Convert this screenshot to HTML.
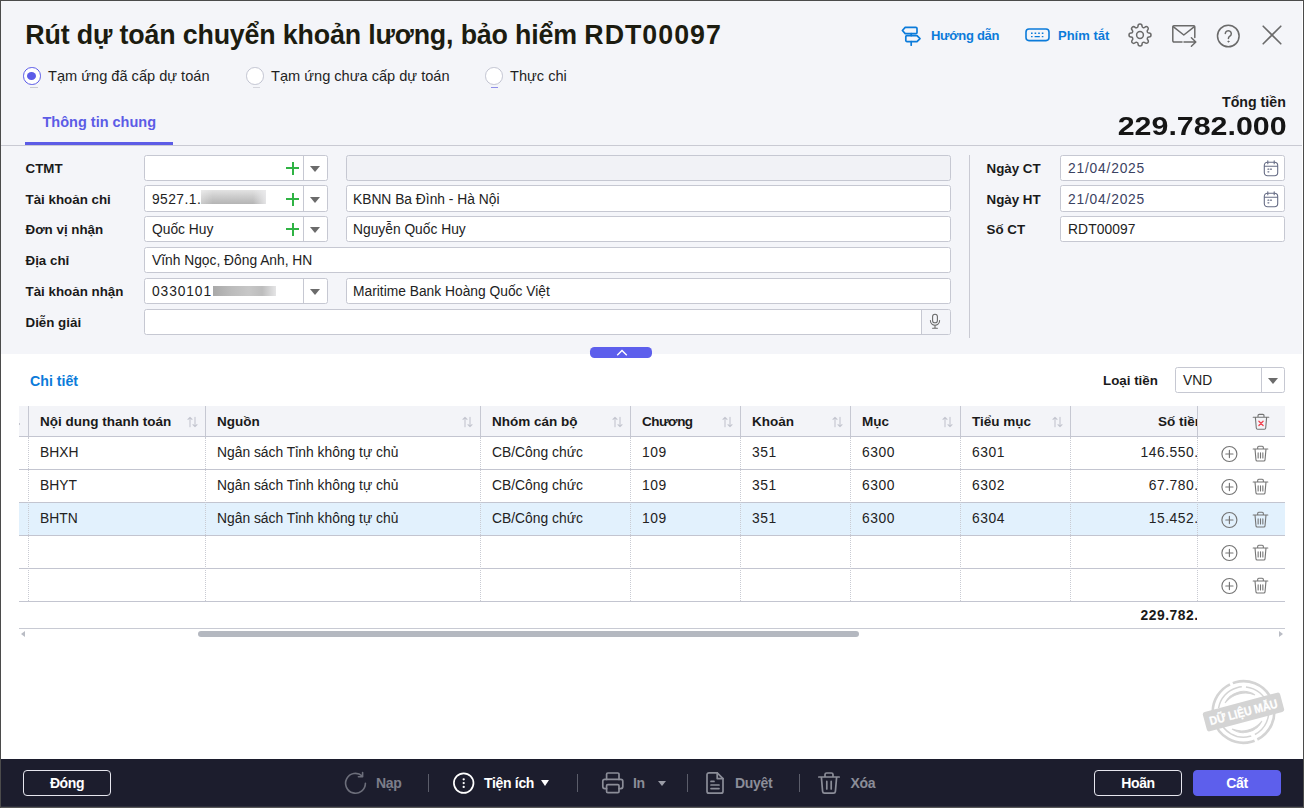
<!DOCTYPE html>
<html lang="vi"><head><meta charset="utf-8"><title>Rút dự toán chuyển khoản lương, bảo hiểm</title>
<style>
*{box-sizing:border-box;margin:0;padding:0}
html,body{width:1304px;height:808px;overflow:hidden;background:#fff}
body{font-family:"Liberation Sans",sans-serif;color:#1f1f1f;position:relative}
.a{position:absolute;white-space:nowrap}
#win{position:absolute;left:0;top:0;width:1304px;height:808px;background:#fff;overflow:hidden}
#hdr{position:absolute;left:0;top:0;width:1302px;height:354px;background:#f4f5f9}
.bl{position:absolute;left:0;top:0;width:1px;height:808px;background:#4b4b4b}
.bt{position:absolute;left:0;top:0;width:1304px;height:1px;background:#4b4b4b}
.br{position:absolute;left:1303px;top:0;width:1px;height:808px;background:#4b4b4b}
#title{left:25.300px;top:19px;font-size:26.8px;font-weight:700;color:#1c1c10;line-height:32px}
.lnk{color:#0b7bda;font-weight:700;font-size:13px;line-height:16px}
.rad{position:absolute;width:17.600px;height:17.600px;border-radius:50%;background:#fff;border:1.300px solid #c3c5d2}
.rad.on{border-color:#5c5ce8}
.rad.on:after{content:"";position:absolute;left:3.200px;top:3.500px;width:9px;height:8.200px;border-radius:50%;background:#5c5ce8}
.rl{font-size:14.6px;line-height:18px;color:#1f1f1f}
.lb{font-size:13.35px;font-weight:700;line-height:16px;color:#1a1a1a}
.fd{position:absolute;height:26px;background:#fff;border:1px solid #c6c8d2;border-radius:2.500px;font-size:13.8px;line-height:26px;padding-left:7px;white-space:nowrap;overflow:hidden;color:#222}
.fd.dis{background:#f1f2f6}
.sep{position:absolute;top:0;width:1px;height:24px;background:#c6c8d2}
.caret{position:absolute;width:0;height:0;border-left:5px solid transparent;border-right:5px solid transparent;border-top:6px solid #6b6b6b;margin-left:-.5px}
.plus{position:absolute;width:13px;height:13px}
.plus:before{content:"";position:absolute;left:0;top:5.5px;width:13px;height:2px;background:#2fb344}
.plus:after{content:"";position:absolute;left:5.5px;top:0;width:2px;height:13px;background:#2fb344}
.blur{position:absolute;height:14px;background:linear-gradient(90deg,rgba(255,255,255,.3) 0%,rgba(255,255,255,0) 18%,rgba(255,255,255,0) 80%,rgba(236,236,238,.85) 100%),linear-gradient(180deg,#e3e3e3,#cdcdcd 45%,#b4b4b4);filter:blur(.3px)}
.blur2{position:absolute;background:linear-gradient(90deg,#a9a9a9 0%,#bcbcbc 30%,#c7c7c7 57%,#bdbdbd 78%,#e5e5e6 100%);filter:blur(.3px)}
.num{letter-spacing:.45px}.num2{letter-spacing:.8px}.dt{color:#3b4262}
.hl{left:19px;width:1266px;height:1px;background:#c3c5d0}
.vd{top:437px;width:0;height:164px;border-left:1px dotted #c9cbd3}
.th{top:414px;font-size:13.5px;font-weight:700;line-height:16px;color:#1a1a1a}
.td{font-size:13.85px;line-height:18px;color:#222}
.td.n{letter-spacing:.55px}
.btn{width:88px;height:26px;border:1px solid #e6e6ee;border-radius:4px;color:#fff;font-weight:700;font-size:14px;letter-spacing:-.4px;line-height:24px;text-align:center}
.ft{font-size:14px;font-weight:700;line-height:18px;letter-spacing:-.32px}
.ft.dis{color:#7c7e8a}.ft.dis2{color:#8b8d98}
.fs{top:774px;width:1px;height:18px;background:#5b5d6a}
</style></head><body>
<div id="win">
<div id="hdr"></div>
<div class="a" id="title"><span style="letter-spacing:-.16px">Rút dự toán chuyển khoản lương, bảo hiểm</span></div><div class="a" id="title" style="left:584.300px;letter-spacing:1px">RDT00097</div>
<svg class="a" style="left:900px;top:24px" width="24" height="24" viewBox="0 0 24 24" fill="none" stroke="#0b7bda" stroke-width="1.7" stroke-linejoin="round" stroke-linecap="round"><path d="M5.2 3.4h10.6a1.2 1.2 0 0 1 1.2 1.2v3.8a1.2 1.2 0 0 1-1.2 1.2H5.2L2.4 6.5z"/><path d="M7 11.6h10l3 3-3 3H7a1.2 1.2 0 0 1-1.2-1.2v-3.6A1.2 1.2 0 0 1 7 11.6z"/><path d="M11.2 9.6v2M11.2 17.6v3.6"/></svg>
<div class="a lnk" style="left:931px;top:27.500px;font-size:13px;letter-spacing:-.27px">Hướng dẫn</div>
<svg class="a" style="left:1025px;top:28px" width="25" height="14" viewBox="0 0 25 14" fill="none" stroke="#0b7bda" stroke-width="1.6"><rect x="1" y="1" width="23" height="11.6" rx="3"/><path d="M6 5.2h1.6M9.6 5.2h1.6M13.2 5.2h1.6M16.8 5.2h1.6M6 8.6h1.6M9.6 8.6h5.2M16.8 8.6h1.6" stroke-width="1.4"/></svg>
<div class="a lnk" style="left:1058px;top:27.500px;font-size:13px;letter-spacing:0">Phím tắt</div>
<svg class="a" style="left:1128px;top:23px" width="24" height="24" viewBox="0 0 24 24" fill="none" stroke="#6a6a6a" stroke-width="1.5" stroke-linejoin="round" stroke-linecap="round"><circle cx="12" cy="12" r="3.400"/><path d="M19.4 15a1.65 1.65 0 0 0 .33 1.82l.06.06a2 2 0 1 1-2.83 2.83l-.06-.06a1.65 1.65 0 0 0-1.82-.33 1.65 1.65 0 0 0-1 1.51V21a2 2 0 0 1-4 0v-.09A1.65 1.65 0 0 0 9 19.4a1.65 1.65 0 0 0-1.82.33l-.06.06a2 2 0 1 1-2.83-2.83l.06-.06a1.65 1.65 0 0 0 .33-1.82 1.65 1.65 0 0 0-1.51-1H3a2 2 0 0 1 0-4h.09A1.65 1.65 0 0 0 4.600 9a1.65 1.65 0 0 0-.33-1.820l-.06-.06a2 2 0 1 1 2.83-2.83l.06.06a1.65 1.650 0 0 0 1.82.33H9a1.65 1.65 0 0 0 1-1.51V3a2 2 0 0 1 4 0v.09a1.65 1.65 0 0 0 1 1.51 1.65 1.65 0 0 0 1.82-.33l.06-.06a2 2 0 1 1 2.83 2.83l-.06.06a1.65 1.65 0 0 0-.33 1.82V9a1.65 1.65 0 0 0 1.51 1H21a2 2 0 0 1 0 4h-.09a1.65 1.65 0 0 0-1.51 1z"/></svg>
<svg class="a" style="left:1171px;top:24px" width="27" height="24" viewBox="0 0 27 24" fill="none" stroke="#6a6a6a" stroke-width="1.5" stroke-linejoin="round" stroke-linecap="round"><path d="M11 18H3a1.2 1.2 0 0 1-1.200-1.200V3a1.200 1.200 0 0 1 1.200-1.200h19.600A1.200 1.200 0 0 1 23.800 3v10.500"/><path d="M2.200 2.600l10.600 8.400 10.600-8.400"/><path d="M13 18h11.600M20.400 13.800l4.400 4.200-4.400 4.200"/></svg>
<svg class="a" style="left:1216px;top:24px" width="25" height="25" viewBox="0 0 25 25" fill="none" stroke="#6a6a6a" stroke-width="1.5" stroke-linecap="round"><circle cx="12.300" cy="12" r="10.800"/><path d="M9.300 9.600a3 3 0 1 1 4.600 2.600c-.9.600-1.500 1.100-1.500 2.300"/><circle cx="12.400" cy="17.600" r=".6" fill="#6a6a6a" stroke-width=".8"/></svg>
<svg class="a" style="left:1262px;top:25px" width="20" height="20" viewBox="0 0 20 20" fill="none" stroke="#6a6a6a" stroke-width="1.600" stroke-linecap="round"><path d="M1.200 1.200l17.600 17.600M18.800 1.200L1.200 18.800"/></svg>

<div class="rad on" style="left:23.200px;top:67px"></div><div class="a rl" style="left:48px;top:67px">Tạm ứng đã cấp dự toán</div>
<div class="rad" style="left:246px;top:67px"></div><div class="a rl" style="left:271px;top:67px">Tạm ứng chưa cấp dự toán</div>
<div class="rad" style="left:485px;top:67px"></div><div class="a rl" style="left:510px;top:67px">Thực chi</div>
<div class="a" style="left:30px;top:87px;width:8px;height:1px;background:#c9cad2"></div>
<div class="a" style="left:253px;top:87px;width:7px;height:1px;background:#d4d5dc"></div>
<div class="a" style="left:491px;top:87px;width:7px;height:1px;background:#8f8fe8"></div>
<div class="a" style="right:18.200px;top:94px;font-size:14.2px;font-weight:700;line-height:16px;color:#1a1a1a">Tổng tiền</div>
<div class="a" style="right:17.500px;top:111px;font-size:26px;font-weight:700;line-height:30px;color:#151515;transform:scaleX(1.168);transform-origin:100% 50%">229.782.000</div>
<div class="a" style="left:42.500px;top:113px;font-size:14.5px;font-weight:700;line-height:18px;color:#5c5ce6">Thông tin chung</div>
<div class="a" style="left:25px;top:142px;width:148px;height:3px;background:#5c5ce6"></div>
<div class="a" style="left:1px;top:145px;width:1301px;height:1px;background:#c9cad3"></div>

<!--TOTAL-->
<!--TAB-->
<div class="a lb" style="left:25.500px;top:161px">CTMT</div>
<div class="a lb" style="left:25.500px;top:192px">Tài khoản chi</div>
<div class="a lb" style="left:25.500px;top:222px">Đơn vị nhận</div>
<div class="a lb" style="left:25.500px;top:253px">Địa chỉ</div>
<div class="a lb" style="left:25.500px;top:284px">Tài khoản nhận</div>
<div class="a lb" style="left:25.500px;top:315px">Diễn giải</div>

<div class="fd" style="left:144px;top:155px;width:184px"><i class="plus" style="left:141px;top:5.500px"></i><i class="sep" style="left:158px"></i><i class="caret" style="left:165px;top:10px"></i></div>
<div class="fd dis" style="left:346px;top:155px;width:605px;padding-left:6px"></div>

<div class="fd" style="left:144px;top:185px;height:27px;padding-top:1px;width:184px"><span class="num">9527.1.</span><i class="blur" style="left:56px;top:4px;width:65px;height:14px"></i><i class="plus" style="left:141px;top:6.500px"></i><i class="sep" style="left:158px;height:25px"></i><i class="caret" style="left:165px;top:11px"></i></div>
<div class="fd" style="left:346px;top:185px;height:27px;padding-top:1px;width:605px;padding-left:6px">KBNN Ba Đình - Hà Nội</div>

<div class="fd" style="left:144px;top:216px;width:184px">Quốc Huy<i class="plus" style="left:141px;top:5.500px"></i><i class="sep" style="left:158px"></i><i class="caret" style="left:165px;top:10px"></i></div>
<div class="fd" style="left:346px;top:216px;width:605px;padding-left:6px">Nguyễn Quốc Huy</div>

<div class="fd" style="left:144px;top:247px;width:807px">Vĩnh Ngọc, Đông Anh, HN</div>

<div class="fd" style="left:144px;top:278px;width:184px"><span class="num" style="letter-spacing:.9px">0330101</span><i class="blur2" style="left:68px;top:7px;width:63px;height:10px"></i><i class="sep" style="left:158px"></i><i class="caret" style="left:165px;top:10px"></i></div>
<div class="fd" style="left:346px;top:278px;width:605px;padding-left:6px">Maritime Bank Hoàng Quốc Việt</div>

<div class="fd" style="left:144px;top:309px;width:807px"><i class="a" style="left:777px;top:0;width:29px;height:24px;background:#f4f5f9"></i><i class="sep" style="left:776px"></i>
<svg class="a" style="left:782px;top:3.300px" width="16" height="17" viewBox="0 0 16 17" fill="none" stroke="#6a6a6a" stroke-width="1.100" stroke-linecap="round"><rect x="5.600" y="1.200" width="4.800" height="8.600" rx="2.400"/><path d="M3.400 7.600a4.600 4.600 0 0 0 9.200 0M8 12.400v2.600M5.600 15.200h4.800"/></svg></div>

<div class="a" style="left:969px;top:155px;width:1px;height:183px;background:#c9cad3"></div>

<div class="a lb" style="left:986.500px;top:161px">Ngày CT</div>
<div class="a lb" style="left:986.500px;top:192px">Ngày HT</div>
<div class="a lb" style="left:986.500px;top:222px">Số CT</div>
<div class="fd dt" style="left:1060px;top:155px;width:225px"><span class="num2">21/04/2025</span><svg class="a cal" style="left:201px;top:3px" width="18" height="19" viewBox="0 0 18 19" fill="none" stroke="#666c85" stroke-width="1.100" stroke-linecap="round"><rect x="2.300" y="3.300" width="13.400" height="13.400" rx="3.200"/><path d="M2.500 7.300h13M5.800 1.700v3M12.200 1.700v3"/><path d="M6 10.200h.8M8.600 10.200h.8M6 12.800h.8" stroke-width="1.300"/></svg></div>
<div class="fd dt" style="left:1060px;top:185px;height:27px;padding-top:1px;width:225px"><span class="num2">21/04/2025</span><svg class="a cal" style="left:201px;top:4px" width="18" height="19" viewBox="0 0 18 19" fill="none" stroke="#666c85" stroke-width="1.100" stroke-linecap="round"><rect x="2.300" y="3.300" width="13.400" height="13.400" rx="3.200"/><path d="M2.500 7.300h13M5.800 1.700v3M12.200 1.700v3"/><path d="M6 10.200h.8M8.600 10.200h.8M6 12.800h.8" stroke-width="1.300"/></svg></div>
<div class="fd" style="left:1060px;top:216px;width:225px"><span style="letter-spacing:.1px">RDT00097</span></div>

<div class="a" style="left:590px;top:347px;width:62px;height:11px;border-radius:4.500px;background:#5d5fec"></div>
<svg class="a" style="left:615px;top:348px" width="14" height="9" viewBox="0 0 14 9" fill="none" stroke="#fff" stroke-width="1.400"><path d="M2.200 7.300L7 2.600l4.800 4.700"/></svg>

<!--TABLE_START-->
<div class="a" style="left:30px;top:372px;font-size:14.2px;font-weight:700;line-height:18px;color:#0b7bda">Chi tiết</div>
<div class="a lb" style="left:1103px;top:373px">Loại tiền</div>
<div class="fd" style="left:1175px;top:367px;width:110px">VND<i class="sep" style="left:85px"></i><i class="caret" style="left:92px;top:10px"></i></div>
<div class="a" style="left:19px;top:406px;width:1266px;height:30px;background:#f3f4f8"></div>
<div class="a" style="left:19px;top:503px;width:1266px;height:32px;background:#e2f1fd"></div>
<div class="a hl" style="top:436px"></div>
<div class="a hl" style="top:469px"></div>
<div class="a hl" style="top:502px"></div>
<div class="a hl" style="top:535px"></div>
<div class="a hl" style="top:568px"></div>
<div class="a hl" style="top:601px"></div>
<div class="a hl" style="top:628px;background:#c8cad3"></div>
<div class="a" style="left:28px;top:406px;width:1px;height:30px;background:#c6c8d2"></div>
<div class="a" style="left:205px;top:406px;width:1px;height:30px;background:#c6c8d2"></div>
<div class="a" style="left:480px;top:406px;width:1px;height:30px;background:#c6c8d2"></div>
<div class="a" style="left:630px;top:406px;width:1px;height:30px;background:#c6c8d2"></div>
<div class="a" style="left:740px;top:406px;width:1px;height:30px;background:#c6c8d2"></div>
<div class="a" style="left:850px;top:406px;width:1px;height:30px;background:#c6c8d2"></div>
<div class="a" style="left:960px;top:406px;width:1px;height:30px;background:#c6c8d2"></div>
<div class="a" style="left:1070px;top:406px;width:1px;height:30px;background:#c6c8d2"></div>
<div class="a" style="left:1197px;top:406px;width:1px;height:30px;background:#c6c8d2"></div>
<div class="a vd" style="left:28px"></div>
<div class="a vd" style="left:205px"></div>
<div class="a vd" style="left:480px"></div>
<div class="a vd" style="left:630px"></div>
<div class="a vd" style="left:740px"></div>
<div class="a vd" style="left:850px"></div>
<div class="a vd" style="left:960px"></div>
<div class="a vd" style="left:1070px"></div>
<div class="a vd" style="left:1197px"></div>
<div class="a" style="left:19px;top:423px;width:1px;height:2px;background:#c4c6cf"></div>
<div class="a th" style="left:40px">Nội dung thanh toán</div>
<svg class="a" style="left:187px;top:416px" width="11" height="12" viewBox="0 0 11 12" fill="none" stroke="#c3c5cf" stroke-width="1.100" stroke-linecap="round" stroke-linejoin="round"><path d="M3 10.800V1.400M1 3.400l2-2 2 2M8 1.200v9.400M6 8.600l2 2 2-2"/></svg>
<div class="a th" style="left:217px">Nguồn</div>
<svg class="a" style="left:462px;top:416px" width="11" height="12" viewBox="0 0 11 12" fill="none" stroke="#c3c5cf" stroke-width="1.100" stroke-linecap="round" stroke-linejoin="round"><path d="M3 10.800V1.400M1 3.400l2-2 2 2M8 1.200v9.400M6 8.600l2 2 2-2"/></svg>
<div class="a th" style="left:492px">Nhóm cán bộ</div>
<svg class="a" style="left:612px;top:416px" width="11" height="12" viewBox="0 0 11 12" fill="none" stroke="#c3c5cf" stroke-width="1.100" stroke-linecap="round" stroke-linejoin="round"><path d="M3 10.800V1.400M1 3.400l2-2 2 2M8 1.200v9.400M6 8.600l2 2 2-2"/></svg>
<div class="a th" style="left:642px;letter-spacing:-.55px">Chương</div>
<svg class="a" style="left:722px;top:416px" width="11" height="12" viewBox="0 0 11 12" fill="none" stroke="#c3c5cf" stroke-width="1.100" stroke-linecap="round" stroke-linejoin="round"><path d="M3 10.800V1.400M1 3.400l2-2 2 2M8 1.200v9.400M6 8.600l2 2 2-2"/></svg>
<div class="a th" style="left:752px">Khoản</div>
<svg class="a" style="left:832px;top:416px" width="11" height="12" viewBox="0 0 11 12" fill="none" stroke="#c3c5cf" stroke-width="1.100" stroke-linecap="round" stroke-linejoin="round"><path d="M3 10.800V1.400M1 3.400l2-2 2 2M8 1.200v9.400M6 8.600l2 2 2-2"/></svg>
<div class="a th" style="left:862px">Mục</div>
<svg class="a" style="left:942px;top:416px" width="11" height="12" viewBox="0 0 11 12" fill="none" stroke="#c3c5cf" stroke-width="1.100" stroke-linecap="round" stroke-linejoin="round"><path d="M3 10.800V1.400M1 3.400l2-2 2 2M8 1.200v9.400M6 8.600l2 2 2-2"/></svg>
<div class="a th" style="left:972px">Tiểu mục</div>
<svg class="a" style="left:1052px;top:416px" width="11" height="12" viewBox="0 0 11 12" fill="none" stroke="#c3c5cf" stroke-width="1.100" stroke-linecap="round" stroke-linejoin="round"><path d="M3 10.800V1.400M1 3.400l2-2 2 2M8 1.200v9.400M6 8.600l2 2 2-2"/></svg>
<div class="a" style="left:1071px;top:406px;width:126px;height:30px;overflow:hidden"><div class="a th" style="right:-6px;top:8px">Số tiền</div></div>
<div class="a td" style="left:40px;top:443px">BHXH</div>
<div class="a td" style="left:217px;top:443px">Ngân sách Tỉnh không tự chủ</div>
<div class="a td" style="left:492px;top:443px">CB/Công chức</div>
<div class="a td n" style="left:642px;top:443px">109</div>
<div class="a td n" style="left:752px;top:443px">351</div>
<div class="a td n" style="left:862px;top:443px">6300</div>
<div class="a td n" style="left:972px;top:443px">6301</div>
<div class="a" style="left:1071px;top:437px;width:126px;height:32px;overflow:hidden"><div class="a td n" style="right:-26.500px;top:6px">146.550.000</div></div>
<svg class="a" style="left:1220px;top:445px" width="19" height="19" viewBox="0 0 19 19" fill="none" stroke="#747474" stroke-width="1.150" stroke-linecap="round"><circle cx="9.400" cy="9" r="7.500"/><path d="M5.800 9h7.200M9.400 5.400v7.200"/></svg>
<svg class="a" style="left:1251.500px;top:445.3px" width="17" height="17.900" viewBox="0 0 18 19" fill="none" stroke="#747474" stroke-width="1.150" stroke-linecap="round" stroke-linejoin="round"><path d="M1.200 4.300h15.600M6 4.100V2.600a1.200 1.200 0 0 1 1.200-1.200h3.600A1.200 1.200 0 0 1 12 2.600v1.500M3.200 4.600l1 11.200a1.300 1.300 0 0 0 1.300 1.200h7a1.300 1.300 0 0 0 1.300-1.200l1-11.200M6.500 8.400v5.400M9 8.400v5.400M11.500 8.400v5.400"/></svg>
<div class="a td" style="left:40px;top:476px">BHYT</div>
<div class="a td" style="left:217px;top:476px">Ngân sách Tỉnh không tự chủ</div>
<div class="a td" style="left:492px;top:476px">CB/Công chức</div>
<div class="a td n" style="left:642px;top:476px">109</div>
<div class="a td n" style="left:752px;top:476px">351</div>
<div class="a td n" style="left:862px;top:476px">6300</div>
<div class="a td n" style="left:972px;top:476px">6302</div>
<div class="a" style="left:1071px;top:470px;width:126px;height:32px;overflow:hidden"><div class="a td n" style="right:-26.500px;top:6px">67.780.000</div></div>
<svg class="a" style="left:1220px;top:478px" width="19" height="19" viewBox="0 0 19 19" fill="none" stroke="#747474" stroke-width="1.150" stroke-linecap="round"><circle cx="9.400" cy="9" r="7.500"/><path d="M5.800 9h7.200M9.400 5.400v7.200"/></svg>
<svg class="a" style="left:1251.500px;top:478.3px" width="17" height="17.900" viewBox="0 0 18 19" fill="none" stroke="#747474" stroke-width="1.150" stroke-linecap="round" stroke-linejoin="round"><path d="M1.200 4.300h15.600M6 4.100V2.600a1.200 1.200 0 0 1 1.200-1.200h3.600A1.200 1.200 0 0 1 12 2.600v1.500M3.200 4.600l1 11.200a1.300 1.300 0 0 0 1.300 1.200h7a1.300 1.300 0 0 0 1.300-1.200l1-11.200M6.500 8.400v5.400M9 8.400v5.400M11.500 8.400v5.400"/></svg>
<div class="a td" style="left:40px;top:509px">BHTN</div>
<div class="a td" style="left:217px;top:509px">Ngân sách Tỉnh không tự chủ</div>
<div class="a td" style="left:492px;top:509px">CB/Công chức</div>
<div class="a td n" style="left:642px;top:509px">109</div>
<div class="a td n" style="left:752px;top:509px">351</div>
<div class="a td n" style="left:862px;top:509px">6300</div>
<div class="a td n" style="left:972px;top:509px">6304</div>
<div class="a" style="left:1071px;top:503px;width:126px;height:32px;overflow:hidden"><div class="a td n" style="right:-26.500px;top:6px">15.452.000</div></div>
<svg class="a" style="left:1220px;top:511px" width="19" height="19" viewBox="0 0 19 19" fill="none" stroke="#747474" stroke-width="1.150" stroke-linecap="round"><circle cx="9.400" cy="9" r="7.500"/><path d="M5.800 9h7.200M9.400 5.400v7.200"/></svg>
<svg class="a" style="left:1251.500px;top:511.3px" width="17" height="17.900" viewBox="0 0 18 19" fill="none" stroke="#747474" stroke-width="1.150" stroke-linecap="round" stroke-linejoin="round"><path d="M1.200 4.300h15.600M6 4.100V2.600a1.200 1.200 0 0 1 1.200-1.200h3.600A1.200 1.200 0 0 1 12 2.600v1.500M3.200 4.600l1 11.200a1.300 1.300 0 0 0 1.300 1.200h7a1.300 1.300 0 0 0 1.300-1.200l1-11.200M6.500 8.400v5.400M9 8.400v5.400M11.500 8.400v5.400"/></svg>
<svg class="a" style="left:1220px;top:544px" width="19" height="19" viewBox="0 0 19 19" fill="none" stroke="#747474" stroke-width="1.150" stroke-linecap="round"><circle cx="9.400" cy="9" r="7.500"/><path d="M5.800 9h7.200M9.400 5.400v7.200"/></svg>
<svg class="a" style="left:1251.500px;top:544.3px" width="17" height="17.900" viewBox="0 0 18 19" fill="none" stroke="#747474" stroke-width="1.150" stroke-linecap="round" stroke-linejoin="round"><path d="M1.200 4.300h15.600M6 4.100V2.600a1.200 1.200 0 0 1 1.200-1.200h3.600A1.200 1.200 0 0 1 12 2.600v1.500M3.200 4.600l1 11.200a1.300 1.300 0 0 0 1.300 1.200h7a1.300 1.300 0 0 0 1.300-1.200l1-11.200M6.500 8.400v5.400M9 8.400v5.400M11.500 8.400v5.400"/></svg>
<svg class="a" style="left:1220px;top:577px" width="19" height="19" viewBox="0 0 19 19" fill="none" stroke="#747474" stroke-width="1.150" stroke-linecap="round"><circle cx="9.400" cy="9" r="7.500"/><path d="M5.800 9h7.200M9.400 5.400v7.200"/></svg>
<svg class="a" style="left:1251.500px;top:577.3px" width="17" height="17.900" viewBox="0 0 18 19" fill="none" stroke="#747474" stroke-width="1.150" stroke-linecap="round" stroke-linejoin="round"><path d="M1.200 4.300h15.600M6 4.100V2.600a1.200 1.200 0 0 1 1.200-1.200h3.600A1.200 1.200 0 0 1 12 2.600v1.500M3.200 4.600l1 11.200a1.300 1.300 0 0 0 1.300 1.200h7a1.300 1.300 0 0 0 1.300-1.200l1-11.200M6.500 8.400v5.400M9 8.400v5.400M11.500 8.400v5.400"/></svg>
<svg class="a" style="left:1252px;top:413px" width="18" height="18" viewBox="0 0 18 18" fill="none" stroke="#747474" stroke-width="1.100" stroke-linecap="round" stroke-linejoin="round"><path d="M1.200 4.300h15.600M6 4.100V2.600a1.200 1.200 0 0 1 1.200-1.200h3.600A1.200 1.200 0 0 1 12 2.600v1.500M3.400 4.600l.9 10.400a1.300 1.300 0 0 0 1.300 1.200h6.800a1.300 1.300 0 0 0 1.300-1.200l.9-10.400"/><path d="M6.900 8.300l4.200 4.200M11.100 8.300l-4.200 4.200" stroke="#f0424f" stroke-width="1.300"/></svg>
<div class="a" style="left:1071px;top:602px;width:126px;height:26px;overflow:hidden"><div class="a td n" style="right:-26.500px;top:4px;font-weight:700;color:#1a1a1a">229.782.000</div></div>
<div class="a" style="left:198px;top:631px;width:661px;height:6px;border-radius:3px;background:#b4b8c0"></div>
<div class="a" style="left:21px;top:631px;width:0;height:0;border-top:3px solid transparent;border-bottom:3px solid transparent;border-right:4px solid #b9bcc4"></div>
<div class="a" style="left:1279px;top:631px;width:0;height:0;border-top:3px solid transparent;border-bottom:3px solid transparent;border-left:4px solid #b9bcc4"></div>
<!--TABLE_END-->
<svg class="a" style="left:1195.800px;top:672.300px" width="96" height="80" viewBox="0 0 96 80"><g transform="translate(47.500 40)" fill="none" stroke="#d4d4d4"><g transform="rotate(-15)"><circle r="30.800" stroke-width="2.600" stroke-dasharray="42 3 56 4 34 3"/><circle r="25.200" stroke-width="1.500" stroke-dasharray="34 4 48 3"/><path d="M-15.500 -13.500a20.500 20.500 0 0 1 31 0a26 26 0 0 0 -31 0zM-15.500 13.500a20.500 20.500 0 0 0 31 0a26 26 0 0 1 -31 0z" fill="#d4d4d4" stroke-width="1"/><rect x="-40" y="-10" width="80" height="20" rx="2.500" fill="#d4d4d4" stroke="none"/><text x="0" y="4.400" text-anchor="middle" font-family="Liberation Sans, sans-serif" font-weight="700" font-size="12" fill="#fff" stroke="#fff" stroke-width=".3" textLength="70" lengthAdjust="spacingAndGlyphs">DỮ LIỆU MẪU</text></g></g></svg>

<div class="a" style="left:1px;top:759px;width:1302px;height:49px;background:#1c1d2d"></div>
<div class="a btn" style="left:23px;top:770px">Đóng</div>
<div class="a btn" style="left:1094px;top:770px">Hoãn</div>
<div class="a btn" style="left:1193px;top:770px;background:#5d5fec;border-color:#5d5fec">Cất</div>
<svg class="a" style="left:343px;top:771px" width="25" height="25" viewBox="0 0 25 25" fill="none" stroke="#6c6e7a" stroke-width="1.600" stroke-linecap="round" stroke-linejoin="round"><path d="M22.400 12.300a9.900 9.900 0 1 1-3.300-7.400"/><path d="M19.600 1.600v4.200h-4.200" /></svg>
<div class="a ft dis" style="left:376px;top:774px">Nạp</div>
<div class="a fs" style="left:428px"></div>
<svg class="a" style="left:452px;top:771px" width="24" height="24" viewBox="0 0 24 24" fill="none" stroke="#fff" stroke-width="1.700"><circle cx="11.700" cy="12.100" r="9.800"/><g fill="#fff" stroke="none"><circle cx="11.700" cy="8.300" r="1.150"/><circle cx="11.700" cy="12.100" r="1.150"/><circle cx="11.700" cy="15.900" r="1.150"/></g></svg>
<div class="a ft" style="left:484px;top:774px;color:#fff">Tiện ích</div>
<div class="a" style="left:541px;top:780px;width:0;height:0;border-left:4.500px solid transparent;border-right:4.500px solid transparent;border-top:6px solid #fff"></div>
<div class="a fs" style="left:577px"></div>
<svg class="a" style="left:601px;top:771px" width="24" height="24" viewBox="0 0 24 24" fill="none" stroke="#8b8d98" stroke-width="1.700" stroke-linejoin="round" stroke-linecap="round"><path d="M5.600 8.400V3.200a1.200 1.200 0 0 1 1.200-1.200h10a1.200 1.200 0 0 1 1.200 1.200v5.200"/><path d="M5.600 17.600H3.800a2 2 0 0 1-2-2v-5.200a2 2 0 0 1 2-2h16a2 2 0 0 1 2 2v5.200a2 2 0 0 1-2 2H18"/><rect x="5.600" y="13.600" width="12.400" height="8" rx="1.200"/></svg>
<div class="a ft dis2" style="left:633px;top:774px">In</div>
<div class="a" style="left:658px;top:780.500px;width:0;height:0;border-left:4.500px solid transparent;border-right:4.500px solid transparent;border-top:5.500px solid #9b9da7"></div>
<div class="a fs" style="left:687px"></div>
<svg class="a" style="left:704px;top:771px" width="22" height="24" viewBox="0 0 22 24" fill="none" stroke="#8b8d98" stroke-width="1.700" stroke-linejoin="round" stroke-linecap="round"><path d="M13.200 1.800H5a2 2 0 0 0-2 2v16.400a2 2 0 0 0 2 2h12a2 2 0 0 0 2-2V7.600z"/><path d="M13.200 1.800v5.800H19M7 10.400h3M7 14h8M7 17.600h8"/></svg>
<div class="a ft dis2" style="left:735px;top:774px">Duyệt</div>
<div class="a fs" style="left:798.500px"></div>
<svg class="a" style="left:817px;top:771px" width="24" height="24" viewBox="0 0 24 24" fill="none" stroke="#8b8d98" stroke-width="1.700" stroke-linejoin="round" stroke-linecap="round"><path d="M1.800 6h20.400M8 5.800V3.600a1.600 1.600 0 0 1 1.600-1.600h4.800A1.600 1.600 0 0 1 16 3.600v2.200M4.400 6.400l1.200 14a2 2 0 0 0 2 1.800h8.800a2 2 0 0 0 2-1.800l1.200-14M9.800 10.400v7.600M14.200 10.400v7.600"/></svg>
<div class="a ft dis2" style="left:850.500px;top:774px">Xóa</div>
<div class="a" style="left:0;top:807px;width:1304px;height:1px;background:#585858"></div><div class="a" style="left:0;top:806px;width:1304px;height:1px;background:#2c2d3a"></div>

<div class="bl"></div><div class="bt"></div><div class="br"></div>
</div>
</body></html>
